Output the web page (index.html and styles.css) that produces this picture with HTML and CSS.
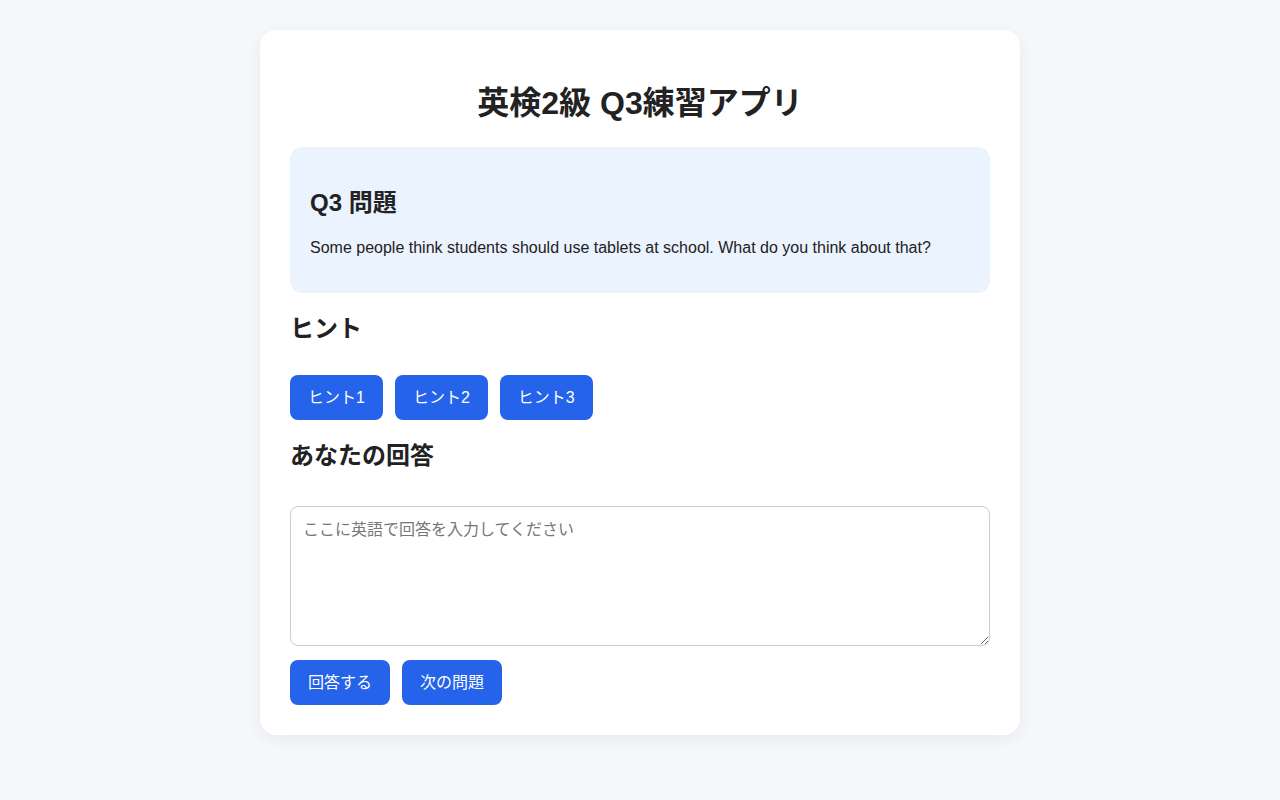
FILE: index.html
```html
<!DOCTYPE html>
<html lang="ja">
<head>
<meta charset="utf-8">
<title>英検2級 Q3練習アプリ</title>
<link rel="stylesheet" href="styles.css">
</head>
<body>
<div class="card">
  <h1 class="title">英検2級 Q3練習アプリ</h1>
  <div class="question">
    <h2 class="q-title">Q3 問題</h2>
    <p class="q-text">Some people think students should use tablets at school. What do you think about that?</p>
  </div>
  <h2 class="section">ヒント</h2>
  <div class="btn-row hints">
    <button class="btn">ヒント1</button>
    <button class="btn">ヒント2</button>
    <button class="btn">ヒント3</button>
  </div>
  <h2 class="section">あなたの回答</h2>
  <textarea class="answer" placeholder="ここに英語で回答を入力してください"></textarea>
  <div class="btn-row actions">
    <button class="btn">回答する</button>
    <button class="btn">次の問題</button>
  </div>
</div>
</body>
</html>
```
FILE: styles.css
```css
html, body {
  margin: 0;
  padding: 0;
}
body {
  background: #f5f7fb;
  font-family: "Liberation Sans", Arial, "Noto Sans CJK JP", sans-serif;
  color: #222;
  padding: 30px 0;
}
.card {
  width: 700px;
  margin: 0 auto;
  background: #fff;
  border-radius: 16px;
  padding: 30px;
  box-shadow: 0 4px 16px rgba(0, 0, 0, 0.06);
}
.title {
  text-align: center;
  font-size: 32px;
  line-height: 42px;
  margin: 22px 0 23px;
}
.question {
  background: #ebf3ff;
  border-radius: 12px;
  padding: 20px;
}
.q-title {
  font-size: 24px;
  line-height: 32px;
  margin: 20px 0;
}
.q-text {
  font-size: 16px;
  line-height: 18px;
  margin: 20px 0 16px;
  color: #222;
}
.section {
  font-size: 24px;
  line-height: 32px;
  margin: 20px 0;
}
.btn-row {
  display: flex;
  gap: 12px;
}
.hints {
  padding-top: 10px;
}
.btn {
  background: #2563eb;
  color: #fff;
  border: none;
  border-radius: 8px;
  padding: 12px 18px;
  font-size: 16px;
  line-height: 21px;
  font-family: inherit;
}
.answer {
  display: block;
  box-sizing: border-box;
  width: 100%;
  height: 140px;
  margin-top: 34px;
  padding: 12px;
  border: 1px solid #ccc;
  border-radius: 8px;
  font-size: 16px;
  line-height: 22px;
  font-family: inherit;
}
.answer::placeholder {
  color: #777;
}
.actions {
  margin-top: 14px;
}
```
